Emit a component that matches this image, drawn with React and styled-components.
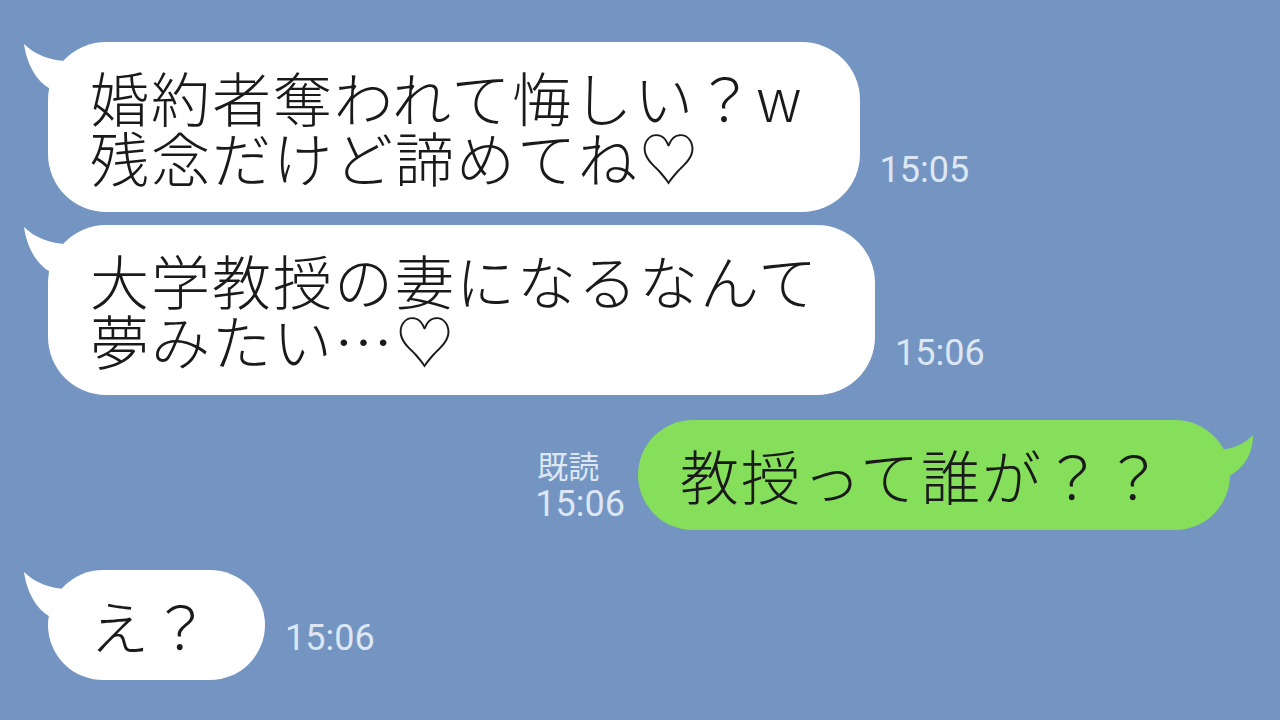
import React from 'react';
import styled, { createGlobalStyle } from 'styled-components';

const Global = createGlobalStyle`
  html, body { margin:0; padding:0; }
  body {
    background:#7494c1;
    font-family:"Noto Sans CJK JP","Noto Sans",sans-serif;
  }
`

const Screen = styled.div`
  width:1280px;
  height:720px;
  overflow:hidden;
  background:#7494c1;
  display:flex;
  flex-direction:column;
  padding:42px 50px 0 48px;
  box-sizing:border-box;
`

const Row = styled.div`
  display:flex;
  align-items:flex-end;
  justify-content:${p => (p.$mine ? 'flex-end' : 'flex-start')};
  margin-top:${p => p.$top || 0}px;
`

const Bubble = styled.div`
  position:relative;
  background:${p => (p.$mine ? '#85df5a' : '#ffffff')};
  color:#1a1a1a;
  font-size:59px;
  line-height:60px;
  font-weight:300;
  padding:25px ${p => p.$pr || 60}px 25px 42px;
  border-radius:58px;
  white-space:pre;
  letter-spacing:2px;
`

const Tail = styled.svg`
  position:absolute;
  top:0;
  ${p => (p.$mine ? 'right:-24px;' : 'left:-26px;')}
  width:50px;
  height:70px;
`

const Time = styled.div`
  font-family:Roboto,"Liberation Sans",sans-serif;
  font-size:36px;
  line-height:40px;
  color:#dde7f4;
  margin:0 0 22px 20px;
`

const ReadInfo = styled.div`
  display:flex;
  flex-direction:column;
  align-items:flex-start;
  font-family:Roboto,"Liberation Sans","Noto Sans CJK JP",sans-serif;
  color:#dde7f4;
  margin:0 13px 6px 0;
  span:first-child {
    font-family:"Noto Sans CJK JP",sans-serif;
    font-size:31px;
    line-height:38px;
    padding-left:2px;
  }
  span:last-child {
    font-size:36px;
    line-height:40px;
  }
`

function LeftTail(){
  return (
    <Tail viewBox="0 0 50 70">
      <path d="M2 2 C12 12 28 19 46 19 L50 19 L50 64 L27 64 L27 46 C16 40 5 24 2 2 Z" fill="#ffffff"/>
    </Tail>
  )
}

function RightTail(){
  return (
    <Tail $mine viewBox="0 0 50 70">
      <path d="M49 15 C40 24 28 30 10 30 L0 30 L0 66 L18 66 L18 60 C36 52 49 38 49 15 Z" fill="#85df5a"/>
    </Tail>
  )
}

export default function App(){
  return (
    <>
      <Global/>
      <Screen>
        <Row>
          <Bubble $pr={56}>
            <LeftTail/>
            {'婚約者奪われて悔しい？w\n残念だけど諦めてね♡'}
          </Bubble>
          <Time>15:05</Time>
        </Row>
        <Row $top={13}>
          <Bubble $pr={56}>
            <LeftTail/>
            {'大学教授の妻になるなんて\n夢みたい…♡'}
          </Bubble>
          <Time>15:06</Time>
        </Row>
        <Row $mine $top={25}>
          <ReadInfo>
            <span>既読</span>
            <span>15:06</span>
          </ReadInfo>
          <Bubble $mine $pr={65}>
            <RightTail/>
            {'教授って誰が？？'}
          </Bubble>
        </Row>
        <Row $top={40}>
          <Bubble $pr={53}>
            <LeftTail/>
            {'え？'}
          </Bubble>
          <Time>15:06</Time>
        </Row>
      </Screen>
    </>
  )
}
